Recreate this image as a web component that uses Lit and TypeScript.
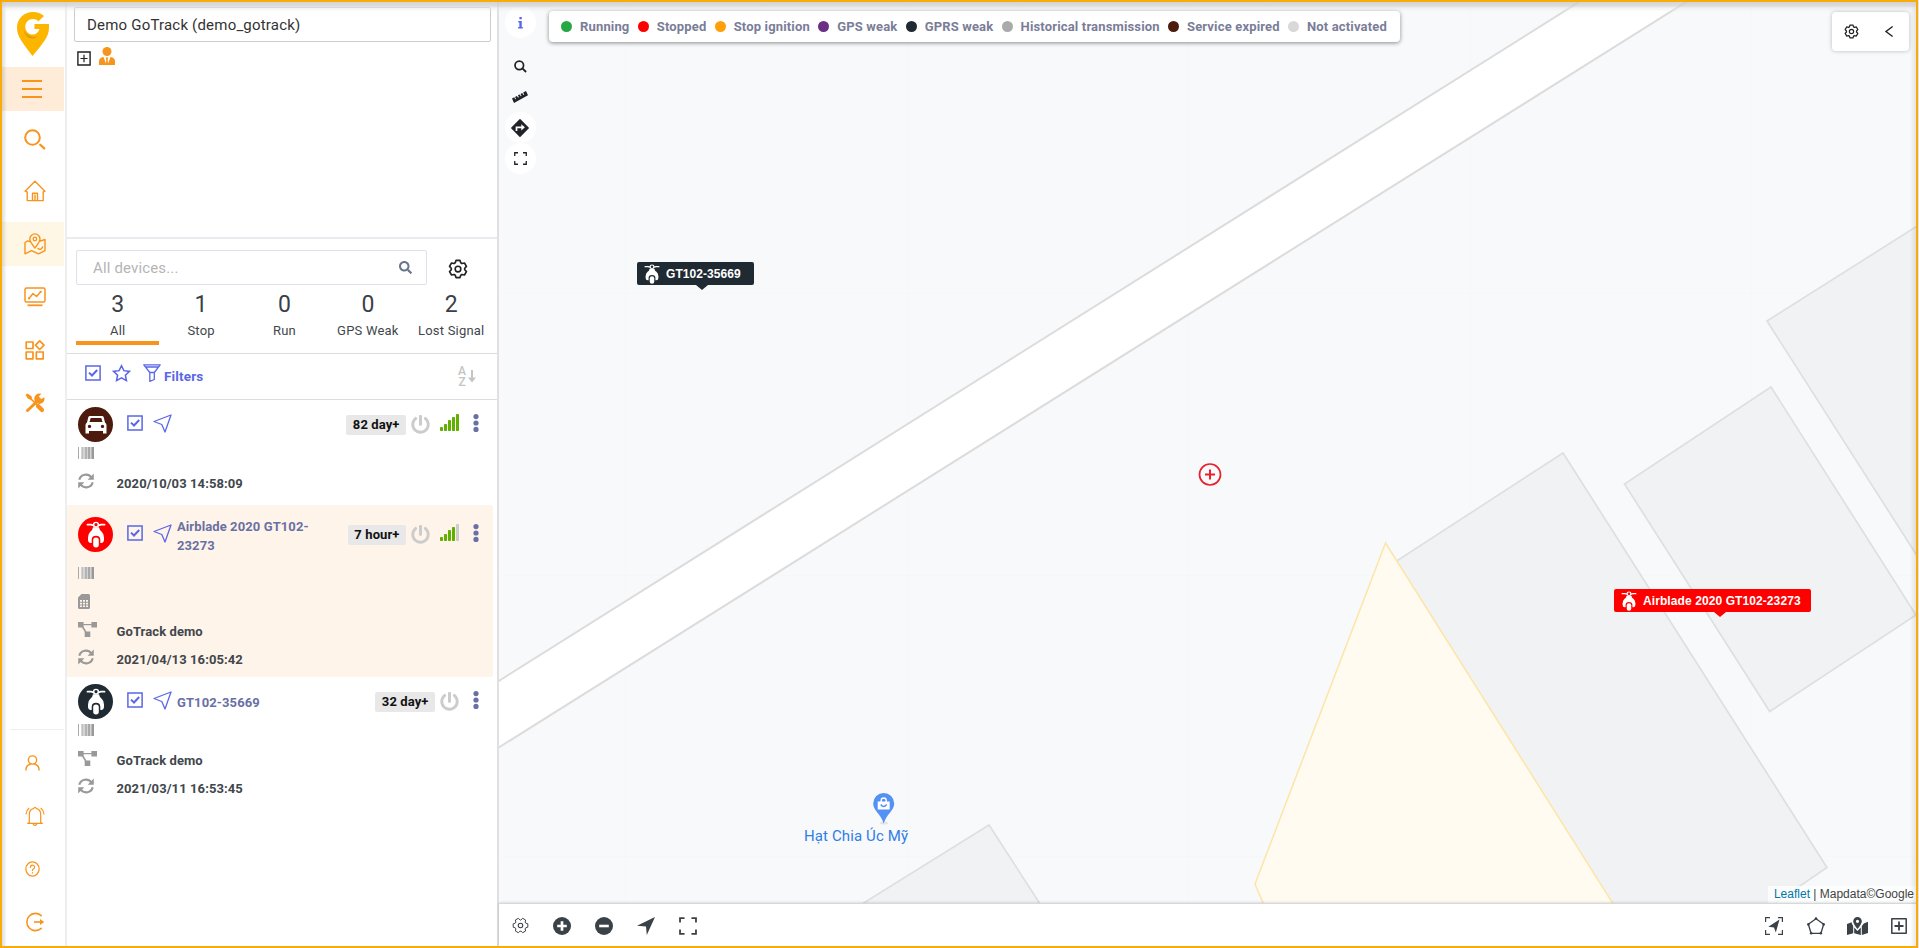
import { LitElement, html, svg, css, nothing } from "lit";
import { customElement, property } from "lit/decorators.js";

/* Outline of a six-toothed cog in a 24x24 box. */
function cog(offset: number): string {
  const pts: string[] = [];
  for (let k = 0; k < 6; k++) {
    const base = k * 60 + offset;
    for (const [da, r] of [[-24, 8.1], [-13, 10.6], [13, 10.6], [24, 8.1]]) {
      const a = ((base + da) * Math.PI) / 180;
      pts.push(`${(12 + r * Math.sin(a)).toFixed(2)} ${(12 - r * Math.cos(a)).toFixed(2)}`);
    }
  }
  return "M" + pts.join("L") + "Z";
}

const stroke = (d: string, w = 1.6) =>
  svg`<path d=${d} fill="none" stroke="currentColor" stroke-width=${w} stroke-linejoin="round" stroke-linecap="round"/>`;
const sharp = (d: string, w = 1.6) => svg`<path d=${d} fill="none" stroke="currentColor" stroke-width=${w}/>`;
const fill = (d: string) => svg`<path d=${d} fill="currentColor" fill-rule="evenodd"/>`;

const LOUPE =
  "M505 442.7L405.3 343c-4.5-4.5-10.6-7-17-7H372c27.6-35.3 44-79.7 44-128C416 93.1 322.9 0 208 0S0 93.1 0 208s93.1 208 208 208c48.3 0 92.7-16.4 128-44v16.3c0 6.4 2.5 12.5 7 17l99.7 99.7c9.4 9.4 24.6 9.4 33.9 0l28.3-28.3c9.4-9.4 9.4-24.6.1-34zM208 336c-70.7 0-128-57.2-128-128 0-70.7 57.2-128 128-128 70.7 0 128 57.2 128 128 0 70.7-57.2 128-128 128z";
const POWER =
  "M400 54.1c63 45 104 118.6 104 201.9 0 136.8-110.8 247.7-247.5 248C120 504.3 8.2 393 8 256.4 7.9 173.1 48.9 99.3 111.8 54.2c11.7-8.3 28-4.8 35 7.7L162.6 90c5.9 10.5 3.1 23.8-6.6 31-41.5 30.8-68 79.6-68 134.9-.1 92.3 74.5 168.1 168 168.1 91.6 0 168.6-74.2 168-169.1-.3-51.8-24.7-101.8-68.1-134-9.7-7.2-12.4-20.5-6.5-30.9l15.8-28.1c7-12.4 23.2-16.1 34.8-7.8zM296 264V24c0-13.3-10.7-24-24-24h-32c-13.3 0-24 10.7-24 24v240c0 13.3 10.7 24 24 24h32c13.3 0 24-10.7 24-24z";

const ICONS: Record<string, { box: string; body: unknown }> = {
  logo: {
    box: "0 0 32 44",
    body: svg`
      <path d="M16 0C7 0 0 6.800 0 15.500C0 25 6 31 15.500 44C26 31 32 25 32 15.500V12H17.500V17H22.500C21.500 20.500 19 22.500 15.800 22.500C11.500 22.500 8.300 19 8.300 14.700C8.300 10.300 11.600 7 16 7C18.200 7 20 7.700 21.500 9.200L27 4C24 1.300 20.400 0 16 0Z" fill="#fdb600"/>
      <path d="M6.500 17C8 22.500 14 25.800 21 24.500C14 29 7 25 6.500 17Z" fill="#e09c08"/>`,
  },
  menu: { box: "0 0 20 18", body: sharp("M0 1H20M0 9H20M0 17H20", 1.9) },
  search: { box: "0 0 22 22", body: svg`<circle cx="8.500" cy="8.500" r="7.300" fill="none" stroke="currentColor" stroke-width="2"/>${stroke("M16.200 15.700L20.200 19.400", 2.2)}` },
  home: { box: "0 0 22 22", body: stroke("M1 11.200L11 1.300L21 11.200L19.200 12V20.600H3.200V12L1 11.200ZM8.500 20.400V13.200H13.500V20.400M11 15V20", 1.4) },
  map: {
    box: "0 0 22 22",
    body: svg`${stroke("M6.500 8.800L3.800 7.800L1 9.500V20.800L7.500 17.600L14.500 20.800L21 17.600V6.500L16 8.200M10.900 15C7.500 10.500 5.800 8.500 5.800 6A5.100 5.100 0 0 1 16 6C16 8.500 14.300 10.500 10.900 15ZM14 15.500C16 17 18 16 18.500 14", 1.4)}<circle cx="10.900" cy="6" r="1.800" fill="none" stroke="currentColor" stroke-width="1.300"/>`,
  },
  monitor: { box: "0 0 22 20", body: svg`${stroke("M2.500 1H19.500Q21 1 21 2.500V13.500Q21 15 19.500 15H2.500Q1 15 1 13.500V2.500Q1 1 2.500 1ZM5 11.500L9 6.500L12.500 9.500L16.500 5", 1.5)}${sharp("M3.500 18.300H18.500", 1.8)}<circle cx="5" cy="11.300" r="1.100" fill="currentColor"/><circle cx="16.700" cy="4.800" r="1.100" fill="currentColor"/>` },
  apps: { box: "0 0 20 20", body: stroke("M1.200 2H8V8.500H1.200ZM1.200 12H8V18.800H1.200ZM11.300 12H18.200V18.800H11.300ZM14.700 .9L19 5.200L14.700 9.500L10.400 5.200Z", 1.7) },
  tools: {
    box: "0 0 20 20",
    body: svg`${stroke("M2.500 17.500L13 7.500", 3)}${stroke("M6 6L11.500 11.200", 1.7)}${stroke("M13 13L17 17", 4.2)}${fill("M.5 2L2.300 .4L6.600 3.300L7 6L5.500 6.700L3 5.800Z")}${fill("M19.400 4.200A5.200 5.200 0 1 1 14.800 .5L16.400 .8L13.800 3.600L16.200 6Z")}`,
  },
  user: { box: "0 0 16 17", body: svg`<circle cx="8" cy="5.300" r="4.400" fill="none" stroke="currentColor" stroke-width="1.500"/>${stroke("M1 16C1 12.500 3.500 10.200 6 9.600M15 16C15 12.500 12.500 10.200 10 9.600", 1.5)}` },
  bell: { box: "0 0 20 20", body: svg`${stroke("M4.300 16.500V8.500C4.300 5 6.500 3 8.500 2.600Q10 0 11.500 2.600C13.500 3 15.700 5 15.700 8.500V16.500L17.300 17.400H2.700L4.300 16.500ZM8.300 18.300Q10 20.300 11.700 18.300", 1.2)}${stroke("M4 2.300Q1.200 4.500 1 8M16 2.300Q18.800 4.500 19 8", 1.1)}` },
  help: { box: "0 0 16 16", body: svg`<circle cx="8" cy="8" r="7.100" fill="none" stroke="currentColor" stroke-width="1.300"/>${stroke("M5.700 6.400Q5.900 4.200 8 4.200T10.300 6.200Q10.300 7.300 8.900 8T8 9.500M8 11.700V11.900", 1.3)}` },
  logout: { box: "0 0 20 20", body: svg`${stroke("M16.200 3.600A8.600 8.600 0 1 0 16.200 16.400", 1.6)}${sharp("M9 10H16", 1.6)}${fill("M15 7L19.200 10L15 13Z")}` },
  plusBox: { box: "0 0 14 15", body: svg`${sharp("M.9 1H13.100V14H.9Z", 1.4)}${sharp("M7 3.800V11.200M3.500 7.500H10.500", 1.2)}` },
  person: { box: "0 0 16 18", body: svg`<circle cx="8" cy="4.500" r="4.500" fill="currentColor"/>${fill("M0 18V14.500Q0 10.500 4.500 10L7 16.500L7.300 12.500L6.500 10.500H9.500L8.700 12.500L9 16.500L11.500 10Q16 10.500 16 14.500V18Z")}` },
  loupe: { box: "0 0 512 512", body: fill(LOUPE) },
  power: { box: "0 0 512 512", body: fill(POWER) },
  cog: { box: "0 0 24 24", body: svg`${stroke(cog(0), 2)}<circle cx="12" cy="12" r="3.400" fill="none" stroke="currentColor" stroke-width="1.900"/>` },
  cogThin: { box: "0 0 24 24", body: svg`${stroke(cog(30), 1.4)}<circle cx="12" cy="12" r="3.200" fill="none" stroke="currentColor" stroke-width="1.500"/>` },
  check: { box: "0 0 16 16", body: svg`${sharp("M.9 .9H15.100V15.100H.9Z", 1.5)}${sharp("M4 7.600L7 10.500L12.200 5", 2)}` },
  star: { box: "0 0 20 19", body: sharp("M10 1.800L12.500 7L18.400 7.800L14.100 11.800L15.200 17.500L10 14.700L4.800 17.500L5.900 11.800L1.600 7.800L7.500 7Z", 1.6) },
  funnel: { box: "0 0 18 18", body: stroke("M.8 .8H17.200L11.300 8.500V15.500L6.800 17.300V8.500L.8 .8ZM2.500 3H15.500M6.800 8.500H11", 1.3) },
  arrowDown: { box: "0 0 8 13", body: svg`${sharp("M4 0V9", 2)}${fill("M0 7.500H8L4 12.500Z")}` },
  nav: { box: "0 0 19 19", body: svg`<path d="M18 1L12 18L8.800 10.500L1 7.500Z" fill="none" stroke="currentColor" stroke-width="1.300" stroke-linejoin="round"/>` },
  navFill: { box: "0 0 18 18", body: fill("M18 0L9.800 18L9 9.500L0 8.800Z") },
  dots: { box: "0 0 6 18", body: svg`<circle cx="3" cy="2.600" r="2.600" fill="currentColor"/><circle cx="3" cy="9" r="2.600" fill="currentColor"/><circle cx="3" cy="15.400" r="2.600" fill="currentColor"/>` },
  barcode: {
    box: "0 0 16 12",
    body: svg`<path d="M3 0H16V12H3Z" fill="#d4d4d4"/><path d="M.5 0V12" stroke="#aaa" stroke-width="1"/><path d="M4.500 0V12" stroke="#c0c0c0" stroke-width="1"/><path d="M8 0V12" stroke="#b4b4b4" stroke-width="2"/><path d="M11 0V12" stroke="#a8a8a8" stroke-width="2"/><path d="M13.500 0V12" stroke="#bbb" stroke-width="1"/><path d="M15 0V12" stroke="#999" stroke-width="2"/>`,
  },
  refresh: { box: "0 0 16 16", body: svg`${sharp("M1.300 6.800A6.700 6.700 0 0 1 13.300 4.500M14.700 9.200A6.700 6.700 0 0 1 2.700 11.500", 2.1)}${fill("M15.800 .6V6.800H9.600ZM.2 15.400V9.200H6.400Z")}` },
  sim: { box: "0 0 12 15", body: svg`${fill("M3.500 0H10.500Q12 0 12 1.500V13.500Q12 15 10.500 15H1.500Q0 15 0 13.500V3.500ZM2 6V7.700H4V6ZM5 6V7.700H7V6ZM8 6V7.700H10V6ZM2 8.800V10.400H4V8.800ZM5 8.800V10.400H7V8.800ZM8 8.800V10.400H10V8.800ZM2 11.500V13H4V11.500ZM5 11.500V13H7V11.500ZM8 11.500V13H10V11.500Z")}` },
  tree: { box: "0 0 19 15", body: svg`${fill("M0 0H5.600V5.400H0ZM13.400 0H19V5.400H13.400ZM6.700 9.400H12.300V15H6.700Z")}${sharp("M5 2.600H14", 1.2)}${sharp("M4.400 4.600L7.800 10", 1.6)}` },
  car: { box: "0 0 22 20", body: svg`${fill("M5 1H17Q18.300 1 18.700 2.300L20 7.500Q21.500 8.500 21.500 10V18.500H18V16H4V18.500H.5V10Q.5 8.500 2 7.500L3.300 2.300Q3.700 1 5 1ZM5.700 3L4.500 7H17.500L16.300 3ZM4.500 9.700A1.700 1.700 0 1 0 4.500 13.100A1.700 1.700 0 1 0 4.500 9.700ZM17.500 9.700A1.700 1.700 0 1 0 17.500 13.100A1.700 1.700 0 1 0 17.500 9.700Z")}` },
  scooter: {
    box: "0 0 20 28",
    body: svg`${stroke("M1.500 3.800H5L7.500 4.500M18.500 3.800H15L12.500 4.500", 1.8)}<circle cx="10" cy="3.800" r="2.400" fill="none" stroke="currentColor" stroke-width="1.500"/>${fill("M7 6.500H13Q13.500 9.500 15.500 11Q18 13.500 18 17V19.500Q18 22.500 15.200 22.800H14.300V19.500Q14.300 15.300 10 15.300T5.700 19.500V22.800H4.800Q2 22.500 2 19.500V17Q2 13.500 4.500 11Q6.500 9.500 7 6.500Z")}<rect x="7.200" y="17" width="5.600" height="10.500" rx="2.800" fill="currentColor"/>`,
  },
  info: { box: "0 0 6 14", body: fill("M1.700 0H4.500V2.700H1.700ZM.3 4.800H4.500V11.700H5.800V13.500H.2V11.700H1.600V6.500H.3Z") },
  glass: { box: "0 0 14 14", body: svg`<circle cx="5.700" cy="5.700" r="4.600" fill="none" stroke="currentColor" stroke-width="1.900"/>${sharp("M8.800 8.800L13 12.900", 2)}` },
  ruler: { box: "0 0 16 12", body: fill("M0 7.500L2.200 6.300L3.300 8.300L4.100 7.900L3 5.900L4.800 5L6.200 6.600L7 6.200L5.900 4.300L7.700 3.400L8.800 5.300L9.600 4.900L8.500 2.900L10.300 2L11.400 3.900L12.200 3.500L11.100 1.500L14 0L16 4.300L2 12Z") },
  turn: { box: "0 0 18 18", body: svg`<path d="M9 .8L17.200 9L9 17.200L.8 9Z" fill="currentColor" stroke="currentColor" stroke-width="1.400" stroke-linejoin="round"/><path d="M5.500 12V8.300H11" fill="none" stroke="#fff" stroke-width="1.700"/><path d="M10.300 5.200L13.900 8.300L10.300 11.400Z" fill="#fff"/>` },
  expand: { box: "0 0 14 14", body: sharp("M.8 4.300V.8H4.300M9.700 .8H13.200V4.300M13.200 9.700V13.200H9.700M4.300 13.200H.8V9.700", 1.4) },
  chevron: { box: "0 0 8 11", body: sharp("M7.600 .5L1 5.500L7.600 10.500", 1.4) },
  plus: { box: "0 0 18 18", body: svg`<circle cx="9" cy="9" r="9" fill="currentColor"/><path d="M9 4.200V13.800M4.200 9H13.800" stroke="#fff" stroke-width="2.700"/>` },
  minus: { box: "0 0 18 18", body: svg`<circle cx="9" cy="9" r="9" fill="currentColor"/><path d="M4.200 9H13.800" stroke="#fff" stroke-width="2.600"/>` },
  locate: { box: "0 0 18 18", body: svg`${sharp("M.6 5V.6H5M13 .6H17.400V5M17.400 13V17.400H13M5 17.400H.6V13", 1.2)}${fill("M14.500 2.500L10.800 15.500L9 10.500L3.300 9.800Z")}` },
  pentagon: { box: "0 0 18 18", body: svg`${sharp("M9 1.800L16.700 7.300L13.900 16.300H4.100L1.300 7.300Z", 1.3)}${[[9, 1.6], [16.6, 7.4], [13.8, 16.2], [4.2, 16.2], [1.4, 7.4]].map(([x, y]) => svg`<circle cx=${x} cy=${y} r="1.300" fill="currentColor"/>`)}` },
  mapPin: { box: "0 0 21 18", body: svg`${fill("M0 7L4.500 5.300Q5 7.500 6.200 9V16.200L0 18ZM7.200 10.500L10.500 14L13.800 10.500V18L7.200 16.200ZM14.800 9L16.800 6.500L21 4.800V16L14.800 18Z")}${fill("M10.500 0A4.300 4.300 0 0 1 14.800 4.300Q14.800 7 10.500 12Q6.200 7 6.200 4.300A4.300 4.300 0 0 1 10.500 0ZM10.500 2.700A1.600 1.600 0 1 0 10.500 5.900A1.600 1.600 0 1 0 10.500 2.700Z")}` },
  addBox: { box: "0 0 16 16", body: svg`${stroke("M.8 .8H15.200V15.200H.8Z", 1.5)}${sharp("M8 3.500V12.500M3.500 8H12.500", 1.8)}` },
};

@customElement("g-icon")
class GIcon extends LitElement {
  @property() name = "";
  @property({ type: Number }) w = 16;
  @property({ type: Number }) h = 16;
  static styles = css`
    :host { display: inline-flex; flex: none; }
    svg { display: block; overflow: visible; }
  `;
  render() {
    const i = ICONS[this.name];
    return html`<svg width=${this.w} height=${this.h} viewBox=${i.box} preserveAspectRatio="none">${i.body}</svg>`;
  }
}

const icon = (name: string, w: number, h: number, cls = "") => html`<g-icon class=${cls} name=${name} .w=${w} .h=${h}></g-icon>`;

interface Device {
  kind: string;
  tone: string;
  name?: string;
  age: string;
  bars?: number;
  lines: [string, string][];
}

const DEVICES: Device[] = [
  { kind: "car", tone: "brown", age: "82 day+", bars: 5, lines: [["barcode", ""], ["refresh", "2020/10/03 14:58:09"]] },
  {
    kind: "scooter", tone: "red", name: "Airblade 2020 GT102-23273", age: "7 hour+", bars: 4,
    lines: [["barcode", ""], ["sim", ""], ["tree", "GoTrack demo"], ["refresh", "2021/04/13 16:05:42"]],
  },
  { kind: "scooter", tone: "ink", name: "GT102-35669", age: "32 day+", lines: [["barcode", ""], ["tree", "GoTrack demo"], ["refresh", "2021/03/11 16:53:45"]] },
];
const LINE_ICON: Record<string, [number, number]> = { barcode: [16, 12], refresh: [16, 16], sim: [12, 15], tree: [19, 15] };

@customElement("device-row")
class DeviceRow extends LitElement {
  @property({ attribute: false }) device!: Device;
  static styles = css`
    :host { display: block; box-sizing: border-box; width: 426px; }
    :host(.first) { height: 105px; }
    :host(.active) { background: #fff4e9; border-radius: 0 3px 3px 0; padding-top: 5px; height: 172px; }
    .head { display: flex; align-items: flex-start; height: 39px; padding: 0 14px 0 11px; box-sizing: border-box; }
    :host(.active) .head { height: 49px; }
    .avatar { width: 35px; height: 35px; margin-top: 7px; border-radius: 50%; color: #fff; display: flex; align-items: center; justify-content: center; }
    .brown { background: #4d1b0e; } .red { background: #f00; } .ink { background: #202a33; }
    .check { margin: 15px 0 0 14px; color: #5a67e6; }
    .nav { margin: 14px 0 0 10px; color: #5a67e6; }
    .name { margin: 16px 0 0 5px; width: 150px; color: #6970a4; font-weight: 700; line-height: 19px; letter-spacing: .1px; }
    :host(.active) .name { margin-top: 7px; }
    .right { margin-left: auto; display: flex; align-items: flex-start; }
    .age { box-sizing: border-box; height: 20px; margin-top: 15px; padding: 0 6.500px; background: #e8e8e8; border-radius: 2px; color: #111; font-weight: 700; line-height: 20px; letter-spacing: .1px; white-space: nowrap; }
    .power { margin: 15px 0 0 5px; color: #ccc; }
    .signal { display: flex; align-items: flex-end; gap: 1px; margin: 14px 0 0 10px; height: 17px; }
    .bar { width: 3px; border-radius: .7px; background: #ccc; }
    .bar.on { background: #5fb000; }
    .dots { margin: 14px 0 0 14px; color: #6970a4; }
    .line { display: flex; align-items: center; height: 28px; padding-left: 11px; }
    .slot { width: 38.500px; display: flex; color: #999; }
    .text { padding-top: 5px; font-weight: 700; color: #3f474d; letter-spacing: .09px; }
  `;
  render() {
    const d = this.device;
    return html`
      <div class="head">
        <div class="avatar ${d.tone}">${d.kind === "car" ? icon("car", 22, 20) : icon("scooter", 20, 27)}</div>
        ${icon("check", 16, 16, "check")} ${icon("nav", 19, 19, "nav")}
        ${d.name ? html`<div class="name">${d.name}</div>` : nothing}
        <div class="right">
          <div class="age">${d.age}</div>
          ${icon("power", 19, 19, "power")}
          ${d.bars
            ? html`<div class="signal">${[4, 7, 11, 14, 17].map((h, i) => html`<div class="bar ${i < d.bars! ? "on" : ""}" style="height:${h}px"></div>`)}</div>`
            : nothing}
          ${icon("dots", 6, 18, "dots")}
        </div>
      </div>
      ${d.lines.map(([k, t]) => html`<div class="line"><div class="slot">${icon(k, ...LINE_ICON[k])}</div><div class="text">${t}</div></div>`)}
    `;
  }
}

@customElement("map-view")
class MapView extends LitElement {
  static styles = css`
    :host { position: relative; display: block; width: 1417px; height: 901px; background: #f8f9fb; overflow: hidden; }
    .canvas { display: block; }
    .tools { position: absolute; left: 6px; top: 5px; display: grid; grid-template-rows: 43px repeat(4, 31px); }
    .tool { width: 31px; height: 31px; box-sizing: border-box; padding-right: 1px; border-radius: 50%; display: flex; align-items: center; justify-content: center; color: #202329; }
    .tool.white { background: #fff; }
    .tool.lead { color: #5a67e6; }
    .tool.seek { padding-top: 2px; }
    .legend { position: absolute; left: 50px; top: 9px; width: 851px; height: 31px; box-sizing: border-box; padding: 0 13px 0 12px; background: #fff; border-radius: 4px; box-shadow: 0 1px 4px rgba(0, 0, 0, .45); display: flex; align-items: center; justify-content: space-between; }
    .item { display: flex; align-items: center; gap: 8px; color: #7a7d98; font-weight: 700; white-space: nowrap; letter-spacing: .16px; }
    .dot { width: 11px; height: 11px; border-radius: 50%; }
    .green { background: #28a745; } .red { background: #f00; } .orange { background: #ff9f0a; } .purple { background: #6c2f83; }
    .ink { background: #202a33; } .gray { background: #aaa; } .brown { background: #4d1b0e; } .light { background: #d8d8d8; }
    .corner { position: absolute; left: 1333px; top: 10px; width: 77px; height: 39px; box-sizing: border-box; padding: 0 16px 0 12px; background: #fff; border-radius: 4px; box-shadow: 0 0 4px rgba(0, 0, 0, .25); display: flex; align-items: center; justify-content: space-between; color: #222; }
    .tag { position: absolute; height: 23px; border-radius: 2px; display: flex; align-items: center; box-sizing: border-box; padding-left: 7px; gap: 6px; color: #fff; font: 700 12px "Liberation Sans", Arial, sans-serif; letter-spacing: .05px; white-space: nowrap; }
    .tag::after { content: ""; position: absolute; top: 100%; border: 6px solid transparent; border-bottom: 0; border-top: 5px solid; }
    .tag-a { left: 138px; top: 260px; width: 116.500px; background: #202a33; }
    .tag-a::after { left: 59px; border-top-color: #202a33; }
    .tag-b { left: 1115px; top: 587px; width: 197px; background: #f00; letter-spacing: .09px; }
    .tag-b::after { left: 100px; border-top-color: #f00; }
    .poi { position: absolute; left: 305px; top: 825px; font-size: 15px; line-height: 18px; letter-spacing: .12px; color: #2f7de8; white-space: nowrap; }
    .credit { position: absolute; right: 0; bottom: 0; height: 17px; padding: 0 2px 0 6px; background: rgba(255, 255, 255, .75); font: 12px/17px "Liberation Sans", Arial, sans-serif; color: #444; white-space: nowrap; }
    .link { color: #0078a8; }
  `;
  render() {
    const legend = [
      ["green", "Running"], ["red", "Stopped"], ["orange", "Stop ignition"], ["purple", "GPS weak"], ["ink", "GPRS weak"],
      ["gray", "Historical transmission"], ["brown", "Service expired"], ["light", "Not activated"],
    ];
    return html`
      <svg class="canvas" width="1417" height="901" viewBox="499 2 1417 901">
        <g stroke="#f6f7f9" stroke-width="1"><path d="M625.500 2V903M907.500 2V903M1188.500 2V903M1470.500 2V903M1751.500 2V903M499 293.500H1916M499 575.500H1916M499 856.500H1916"/></g>
        <path d="M490 686.500L1587 -3H1694L490 753Z" fill="#fff" stroke="#dcdcdc" stroke-width="2"/>
        <g fill="#f1f2f4" stroke="#dedfe1" stroke-width="1.700">
          <path d="M1767 321L1930 218V576Z"/>
          <path d="M1771 387L1624.500 484L1769.700 711.500L1916 615Z"/>
          <path d="M1563 453L1392 564L1610 910H1765L1827 867.500Z"/>
          <path d="M989 825L850 911.500H1045Z"/>
        </g>
        <path d="M1385.500 543L1255 884L1266 910H1617Z" fill="#fffbf0" stroke="#fde5a8" stroke-width="1.500"/>
        <g fill="none" stroke="#ea1f2c" stroke-width="1.700"><circle cx="1210" cy="474.500" r="10.500"/><path d="M1210 469.500V479.500M1205 474.500H1215" stroke-width="2"/></g>
        <ellipse cx="884" cy="823" rx="4" ry="1.500" fill="#e2e4e6"/>
        <path d="M883.700 793A10.500 10.500 0 0 1 894.200 803.500C894.200 811 887 813 883.700 823.500C880.500 813 873.200 811 873.200 803.500A10.500 10.500 0 0 1 883.700 793Z" fill="#5491f5"/>
        <path d="M877.700 801.500H889.700V809.500H877.700Z" fill="#fff"/><path d="M881.200 802V800.500A2.500 2.500 0 0 1 886.200 800.500V802" fill="none" stroke="#fff" stroke-width="1.400"/>
        <path d="M880.700 804.500Q883.700 808.500 886.700 804.500" fill="none" stroke="#5491f5" stroke-width="1.300"/>
      </svg>
      <div class="poi">Hạt Chia Úc Mỹ</div>
      <div class="tag tag-a">${icon("scooter", 16, 20)}<span>GT102-35669</span></div>
      <div class="tag tag-b">${icon("scooter", 16, 20)}<span>Airblade 2020 GT102-23273</span></div>
      <div class="tools">
        <div class="tool white lead">${icon("info", 5, 12)}</div>
        <div class="tool seek">${icon("glass", 13, 13)}</div>
        <div class="tool">${icon("ruler", 16, 12)}</div>
        <div class="tool white">${icon("turn", 18, 18)}</div>
        <div class="tool white">${icon("expand", 13, 13)}</div>
      </div>
      <div class="legend">${legend.map(([c, t]) => html`<div class="item"><span class="dot ${c}"></span>${t}</div>`)}</div>
      <div class="corner">${icon("cog", 15, 15)}${icon("chevron", 8, 11)}</div>
      <div class="credit"><span class="link">Leaflet</span> | Mapdata©Google</div>
    `;
  }
}

@customElement("app-root")
class AppRoot extends LitElement {
  static styles = css`
    :host { display: block; width: 1919px; height: 948px; background: #e4e4e8; font: 13px/16px Roboto, sans-serif; color: #3f474d; }
    .frame { position: relative; box-sizing: border-box; width: 1918px; height: 948px; border: 2px solid #f9ab07; display: flex; background: #fff; overflow: hidden; }
    .frame::after { content: ""; position: absolute; inset: 0; pointer-events: none; background: linear-gradient(#c9c9c9cc, #d2d2d2b8 4px, #e6e6e680 6px, #ffffff00 10px), linear-gradient(90deg, #0002, #0000 5px), linear-gradient(270deg, #00000016, #0000 6px); }
    .rail { width: 65px; box-sizing: border-box; display: flex; flex-direction: column; flex: none; border-right: 2px solid #eee; padding-right: 1px; color: #f7941d; }
    .logo { height: 65px; box-sizing: border-box; padding: 10px 0 0 15px; }
    .cell { height: 44px; margin-bottom: 9px; display: flex; align-items: center; justify-content: center; padding-left: 3px; box-sizing: border-box; }
    .cell.burger { background: #feecd8; margin-bottom: 5px; padding: 0 8px 0 6px; }
    .cell.lens { padding: 3px 0 0 3px; }
    .cell.on { background: #fff7e6; }
    .low { margin-top: auto; margin-left: 8px; border-top: 1px solid #eee; height: 217px; box-sizing: border-box; padding-top: 11px; }
    .low .cell { justify-content: flex-start; padding-left: 15px; }
    .panel { width: 430px; flex: none; display: flex; flex-direction: column; border-right: 2px solid #e0e0e2; }
    .top { height: 235px; border-bottom: 2px solid #eaeaef; box-sizing: content-box; }
    .account { margin: 5px 6px 0 7px; height: 35px; box-sizing: border-box; border: 1px solid #ccc; border-radius: 2px; padding-left: 12px; display: flex; align-items: center; font-size: 15px; letter-spacing: .2px; color: #333; }
    .tree { display: flex; align-items: flex-start; gap: 8px; padding: 5px 0 0 10px; color: #f7941d; }
    .box { color: #222; margin-top: 4px; }
    .find { display: flex; align-items: center; padding: 11px 0 0 9px; }
    .input { width: 351px; height: 35px; box-sizing: border-box; border: 1px solid #dfe0ea; border-radius: 2px; display: flex; align-items: center; justify-content: space-between; padding: 0 14px 0 16px; font-size: 15px; letter-spacing: .15px; color: #b5b5b5; }
    .loupe { color: #6b7590; }
    .gear { color: #222; margin: 3px 0 0 21px; }
    .tabs { display: grid; grid-template-columns: repeat(5, 83.400px); padding-left: 9px; height: 60px; margin-bottom: 8px; }
    .tab { display: flex; flex-direction: column; align-items: center; box-sizing: border-box; white-space: nowrap; }
    .tab.on { border-bottom: 4px solid #f7941d; }
    .num { font-size: 23px; line-height: 26px; padding-top: 7px; color: #3c3f47; }
    .lab { line-height: 16px; padding-top: 5px; letter-spacing: .2px; }
    .filters { height: 47px; box-sizing: border-box; border: solid #ddd; border-width: 1px 0; display: flex; align-items: flex-start; padding: 10px 21px 0 18px; color: #5a67e6; }
    .chk { margin: 1px 11px 0 0; }
    .fun { margin: 0 3px 0 12px; }
    .word { font-weight: 700; letter-spacing: .15px; padding-top: 4px; font-size: 13.500px; }
    .sort { margin: 2px 0 0 auto; display: flex; align-items: center; gap: 2px; color: #c4c4c4; }
    .az { display: grid; font-size: 12px; line-height: 10.500px; text-align: center; font-weight: 500; }
    .stage { display: flex; flex-direction: column; width: 1417px; flex: none; }
    .foot { position: relative; height: 43px; box-sizing: border-box; border-top: 1px solid #d8d8da; display: grid; grid-template-columns: repeat(5, 42px) 1fr repeat(4, 41.800px); margin-right: -4px; align-items: center; justify-items: center; color: #3a4147; box-shadow: 0 0 3px #0003; background: #fff; padding-top: 1px; }
  `;
  render() {
    const nav: [string, number, number, string?][] = [["search", 22, 22, "lens"], ["home", 22, 22], ["map", 22, 22, "on"], ["monitor", 22, 20], ["apps", 20, 20], ["tools", 20, 20]];
    const low: [string, number, number][] = [["user", 15, 16], ["bell", 20, 20], ["help", 15, 16], ["logout", 20, 20]];
    const tabs = [["3", "All"], ["1", "Stop"], ["0", "Run"], ["0", "GPS Weak"], ["2", "Lost Signal"]];
    return html`
      <div class="frame">
        <div class="rail">
          <div class="logo">${icon("logo", 32, 44)}</div>
          <div class="cell burger">${icon("menu", 20, 18)}</div>
          ${nav.map(([n, w, h, cls]) => html`<div class="cell ${cls ?? ""}">${icon(n, w, h)}</div>`)}
          <div class="low">${low.map(([n, w, h]) => html`<div class="cell">${icon(n, w, h)}</div>`)}</div>
        </div>
        <div class="panel">
          <div class="top">
            <div class="account">Demo GoTrack (demo_gotrack)</div>
            <div class="tree">${icon("plusBox", 14, 15, "box")}${icon("person", 16, 18)}</div>
          </div>
          <div class="find">
            <div class="input"><span>All devices...</span>${icon("loupe", 13, 13, "loupe")}</div>
            ${icon("cog", 20, 20, "gear")}
          </div>
          <div class="tabs">
            ${tabs.map(([n, l], i) => html`<div class="tab ${i ? "" : "on"}"><div class="num">${n}</div><div class="lab">${l}</div></div>`)}
          </div>
          <div class="filters">
            ${icon("check", 16, 16, "chk")}${icon("star", 19, 18)}${icon("funnel", 18, 18, "fun")}
            <span class="word">Filters</span>
            <div class="sort"><div class="az"><span>A</span><span>Z</span></div>${icon("arrowDown", 8, 13)}</div>
          </div>
          ${DEVICES.map((d, i) => html`<device-row class=${["first", "active", ""][i]} .device=${d}></device-row>`)}
        </div>
        <div class="stage">
          <map-view></map-view>
          <div class="foot">
            ${icon("cogThin", 17, 17)}${icon("plus", 18, 18)}${icon("minus", 18, 18)}${icon("navFill", 18, 18)}${icon("expand", 18, 18)}
            <span></span>
            ${icon("locate", 18, 18)}${icon("pentagon", 18, 18)}${icon("mapPin", 21, 18)}${icon("addBox", 16, 16)}
          </div>
        </div>
      </div>
    `;
  }
}
